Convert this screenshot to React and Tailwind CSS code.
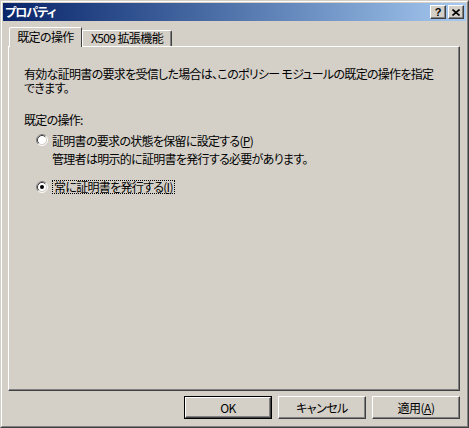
import React from 'react';

// classic 3D radio button
const Radio = ({ checked }) => (
  <svg width="12" height="12" viewBox="0 0 12 12" className="shrink-0">
    <circle cx="6" cy="6" r="4.5" fill="#ffffff" />
    <path d="M2.11 9.89 A5.5 5.5 0 0 1 9.89 2.11" fill="none" stroke="#808080" strokeWidth="1" />
    <path d="M9.89 2.11 A5.5 5.5 0 0 1 2.11 9.89" fill="none" stroke="#ffffff" strokeWidth="1" />
    <path d="M2.82 9.18 A4.5 4.5 0 0 1 9.18 2.82" fill="none" stroke="#404040" strokeWidth="1" />
    <path d="M9.18 2.82 A4.5 4.5 0 0 1 2.82 9.18" fill="none" stroke="#d4d0c8" strokeWidth="1" />
    {checked && <circle cx="6" cy="6" r="2" fill="#000000" />}
  </svg>
);

const CaptionButton = ({ children }) => (
  <div className="w-[16px] h-[14px] bg-[#d4d0c8] border border-t-white border-l-white border-r-[#404040] border-b-[#404040] shadow-[inset_-1px_-1px_0_#808080] flex items-center justify-center">
    {children}
  </div>
);

const Button = ({ children, isDefault }) => (
  <div className={isDefault ? 'w-[88px] h-[23px] border border-black' : 'w-[88px] h-[23px]'}>
    <div className="w-full h-full bg-[#d4d0c8] border border-t-white border-l-white border-r-[#404040] border-b-[#404040] shadow-[inset_-1px_-1px_0_#808080] flex items-center justify-center text-[12px] leading-[12px] tracking-[-0.5px]">
      {children}
    </div>
  </div>
);

export default function App() {
  return (
    <div className="w-[469px] h-[428px] bg-[#d4d0c8] border border-t-[#d4d0c8] border-l-[#d4d0c8] border-r-[#404040] border-b-[#404040] flex flex-col text-black font-['Noto_Sans_CJK_JP',sans-serif] [font-feature-settings:'palt']">
      <div className="flex-1 flex flex-col border border-t-white border-l-white border-r-[#808080] border-b-[#808080] p-px">
        {/* title bar */}
        <div className="h-[18px] bg-linear-to-r from-[#0a246a] to-[#a6caf0] flex items-center justify-between pl-[2px] pr-[2px]">
          <span className="text-white font-bold text-[12px] leading-[12px] tracking-[-1px]">プロパティ</span>
          <div className="flex gap-[2px]">
            <CaptionButton>
              <span className="font-['Liberation_Sans',sans-serif] font-bold text-[11px] leading-[11px] mt-px">?</span>
            </CaptionButton>
            <CaptionButton>
              <svg width="8" height="7" viewBox="0 0 8 7">
                <path d="M0.5 0.5 L7.5 6.5 M7.5 0.5 L0.5 6.5" stroke="#000" strokeWidth="1.6" />
              </svg>
            </CaptionButton>
          </div>
        </div>

        {/* tabs + panel */}
        <div className="mt-[6px] ml-[5px] mr-[6px] flex flex-col">
          <div className="flex items-end h-[19px] pl-px relative z-10 tracking-[-0.6px]">
            <div className="w-[73px] h-[20px] -mb-px bg-[#d4d0c8] border-l border-t border-r border-l-white border-t-white border-r-[#404040] rounded-tl-[2px] flex items-start justify-center pt-[3px] text-[12px] leading-[12px]">
              既定の操作
            </div>
            <div className="w-[90px] h-[16px] bg-[#d4d0c8] border-l border-t border-r border-l-white border-t-white border-r-[#404040] shadow-[inset_-1px_0_0_#808080] rounded-tr-[2px] flex items-start justify-center pt-px text-[12px] leading-[12px]">
              X509 拡張機能
            </div>
          </div>
          <div className="h-[345px] border border-t-white border-l-white border-r-[#404040] border-b-[#404040] shadow-[inset_-1px_-1px_0_#808080] pl-[15px] text-[12px] leading-[13px] tracking-[-0.7px]">
            <div className="mt-[20px] whitespace-nowrap leading-[14px]">
              <p>有効な証明書の要求を受信した場合は、このポリシー モジュールの既定の操作を指定</p>
              <p>できます。</p>
            </div>
            <p className="mt-[18px]">既定の操作:</p>
            <div className="mt-[7px] ml-[12px] flex items-center gap-[4px] h-[14px]">
              <Radio />
              <span>
                証明書の要求の状態を保留に設定する(<span className="underline">P</span>)
              </span>
            </div>
            <p className="mt-[5px] ml-[28px]">管理者は明示的に証明書を発行する必要があります。</p>
            <div className="mt-[15px] ml-[12px] flex items-center gap-[4px] h-[14px]">
              <Radio checked />
              <span className="border border-dotted border-black px-px leading-[12px]">
                常に証明書を発行する(<span className="underline">I</span>)
              </span>
            </div>
          </div>
        </div>

        {/* buttons */}
        <div className="mt-[5px] flex justify-end gap-[6px] pr-[6px]">
          <Button isDefault>OK</Button>
          <Button>キャンセル</Button>
          <Button>
            適用(<span className="underline">A</span>)
          </Button>
        </div>
      </div>
    </div>
  );
}
